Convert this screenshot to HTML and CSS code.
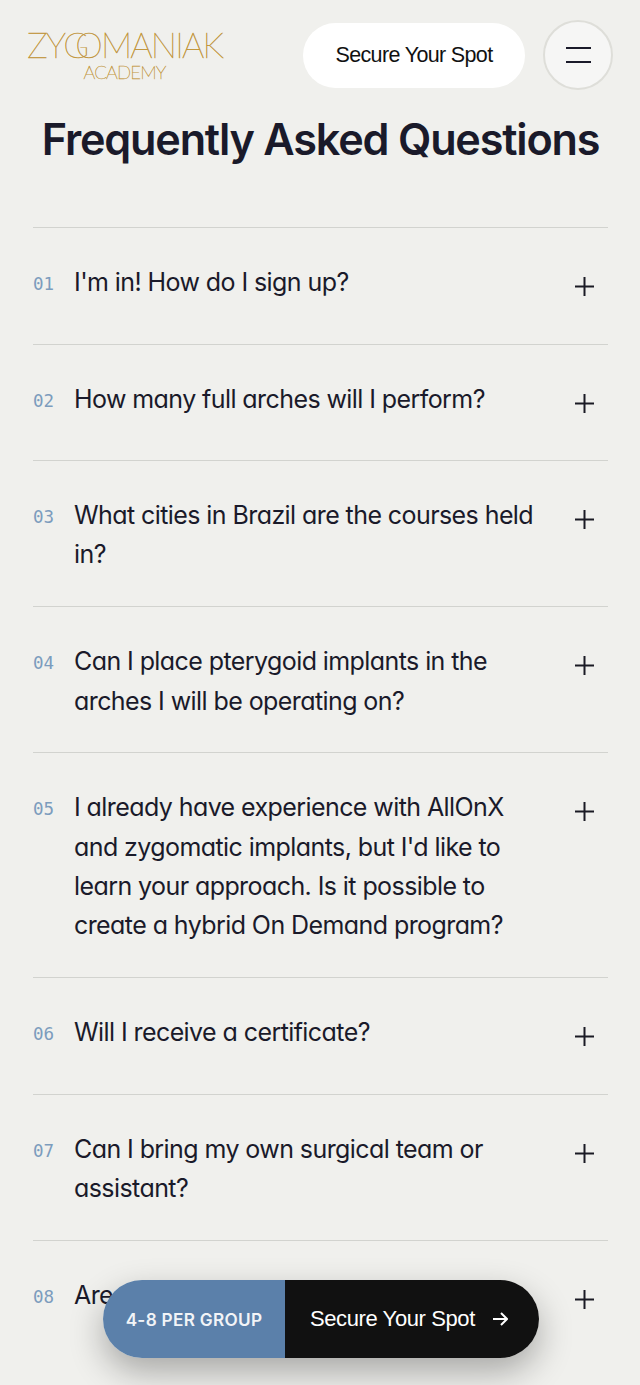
FILE: index.html
```html
<!DOCTYPE html>
<html lang="en">

<head>
    <meta charset="UTF-8">
    <meta name="viewport" content="width=device-width, initial-scale=1.0">
    <title>Frequently Asked Questions</title>
    <link rel="stylesheet" href="styles.css">
</head>

<body>
    <header class="header">
        <div class="logo">
            <div class="logo-name">ZY<span class="logo-g">G</span><span class="logo-o">O</span>MANIAK</div>
            <div class="logo-sub">ACADEMY</div>
        </div>
        <div class="header-actions">
            <a class="header-cta">Secure Your Spot</a>
            <button class="menu-button" aria-label="Menu">
                <span class="menu-line"></span>
                <span class="menu-line"></span>
            </button>
        </div>
    </header>

    <main class="faq">
        <h1 class="faq-title">Frequently Asked Questions</h1>
        <div class="faq-list">
            <div class="faq-item">
                <span class="faq-num">01</span>
                <span class="faq-question">I'm in! How do I sign up?</span>
                <svg class="faq-plus" viewBox="0 0 20 20"><path d="M10 0V20M0 10H20" /></svg>
            </div>
            <div class="faq-item">
                <span class="faq-num">02</span>
                <span class="faq-question">How many full arches will I perform?</span>
                <svg class="faq-plus" viewBox="0 0 20 20"><path d="M10 0V20M0 10H20" /></svg>
            </div>
            <div class="faq-item">
                <span class="faq-num">03</span>
                <span class="faq-question">What cities in Brazil are the courses held in?</span>
                <svg class="faq-plus" viewBox="0 0 20 20"><path d="M10 0V20M0 10H20" /></svg>
            </div>
            <div class="faq-item">
                <span class="faq-num">04</span>
                <span class="faq-question">Can I place pterygoid implants in the arches I will be operating on?</span>
                <svg class="faq-plus" viewBox="0 0 20 20"><path d="M10 0V20M0 10H20" /></svg>
            </div>
            <div class="faq-item">
                <span class="faq-num">05</span>
                <span class="faq-question">I already have experience with AllOnX and zygomatic implants, but I'd like to learn your approach. Is it possible to create a hybrid On Demand program?</span>
                <svg class="faq-plus" viewBox="0 0 20 20"><path d="M10 0V20M0 10H20" /></svg>
            </div>
            <div class="faq-item">
                <span class="faq-num">06</span>
                <span class="faq-question">Will I receive a certificate?</span>
                <svg class="faq-plus" viewBox="0 0 20 20"><path d="M10 0V20M0 10H20" /></svg>
            </div>
            <div class="faq-item">
                <span class="faq-num">07</span>
                <span class="faq-question">Can I bring my own surgical team or assistant?</span>
                <svg class="faq-plus" viewBox="0 0 20 20"><path d="M10 0V20M0 10H20" /></svg>
            </div>
            <div class="faq-item">
                <span class="faq-num">08</span>
                <span class="faq-question">Are</span>
                <svg class="faq-plus" viewBox="0 0 20 20"><path d="M10 0V20M0 10H20" /></svg>
            </div>
        </div>
    </main>

    <div class="sticky-bar">
        <div class="sticky-label">4-8 PER GROUP</div>
        <a class="sticky-cta">
            <span>Secure Your Spot</span>
            <svg class="sticky-arrow" viewBox="0 0 16 14"><path d="M1 7H15M9 1L15 7L9 13" /></svg>
        </a>
    </div>
</body>

</html>
```

FILE: styles.css
```css
* {
    margin: 0;
    padding: 0;
    box-sizing: border-box;
}

html,
body {
    height: 1385px;
    overflow: hidden;
}

body {
    background-color: #f0f0ed;
    color: #1a1a2a;
    font-family: "Inter", "Liberation Sans", sans-serif;
    position: relative;
}

.header {
    display: flex;
    justify-content: space-between;
    align-items: center;
    padding: 20px 27px 0 26px;
}

.logo {
    color: #c2973f;
    font-family: "Lato", sans-serif;
    font-weight: 100;
    text-align: center;
    width: 197px;
    -webkit-text-stroke: 0.5px #c2973f;
}

.logo-name {
    font-size: 35px;
    line-height: 30px;
    letter-spacing: -1.8px;
    white-space: nowrap;
}

.logo-g {
    margin-right: -12px;
}

.logo-sub {
    margin-top: 3px;
    font-size: 18.5px;
    line-height: 20px;
    letter-spacing: -0.8px;
    -webkit-text-stroke: 0.4px #c2973f;
}

.header-actions {
    display: flex;
    align-items: center;
    gap: 18px;
}

.header-cta {
    display: flex;
    align-items: center;
    justify-content: center;
    width: 222px;
    height: 65px;
    border-radius: 33px;
    background-color: #fff;
    color: #111;
    font-family: "Liberation Sans", sans-serif;
    font-size: 21.5px;
    letter-spacing: -0.65px;
}

.menu-button {
    display: flex;
    flex-direction: column;
    align-items: center;
    justify-content: center;
    gap: 12px;
    width: 70px;
    height: 70px;
    border-radius: 50%;
    border: 2px solid #deded9;
    background-color: #f6f6f5;
}

.menu-line {
    width: 25px;
    height: 2px;
    background-color: #1a1a2a;
}

.faq {
    padding: 0 32px 0 33px;
}

.faq-title {
    font-size: 43.2px;
    font-weight: 600;
    line-height: 56px;
    letter-spacing: -1.2px;
    text-align: center;
    white-space: nowrap;
    margin-top: 21px;
    margin-bottom: 60px;
}

.faq-item {
    display: flex;
    align-items: flex-start;
    min-height: 116.6px;
    border-top: 1px solid #d2d3cf;
    padding: 35px 14px 31.5px 0;
}

.faq-num {
    width: 41px;
    flex-shrink: 0;
    padding-top: 2px;
    color: #7c9cbd;
    font-family: "DejaVu Sans Mono", monospace;
    font-size: 17.5px;
    line-height: 39.3px;
}

.faq-question {
    flex: 1;
    max-width: 470px;
    font-size: 25px;
    font-feature-settings: "cv11";
    line-height: 39.3px;
    letter-spacing: -0.58px;
}

.faq-plus {
    width: 19px;
    height: 19px;
    margin-left: auto;
    margin-top: 14px;
    flex-shrink: 0;
    fill: none;
    stroke: #1a1a24;
    stroke-width: 2.1;
}

.sticky-bar {
    position: absolute;
    left: 103px;
    top: 1280px;
    display: flex;
    width: 436px;
    height: 78px;
    border-radius: 39px;
    overflow: hidden;
    box-shadow: 0 14px 34px rgba(0, 0, 0, 0.3);
}

.sticky-label {
    display: flex;
    align-items: center;
    justify-content: center;
    width: 182px;
    background-color: #5b80aa;
    color: #f2f4f7;
    font-family: "Inter", sans-serif;
    font-size: 17.2px;
    font-weight: 600;
    letter-spacing: 0.3px;
}

.sticky-cta {
    flex: 1;
    display: flex;
    align-items: center;
    gap: 17px;
    padding-left: 25px;
    background-color: #111;
    color: #fff;
    font-family: "Liberation Sans", sans-serif;
    font-size: 22px;
    letter-spacing: -0.4px;
}

.sticky-arrow {
    width: 16px;
    height: 14px;
    fill: none;
    stroke: #fff;
    stroke-width: 2;
}
```
